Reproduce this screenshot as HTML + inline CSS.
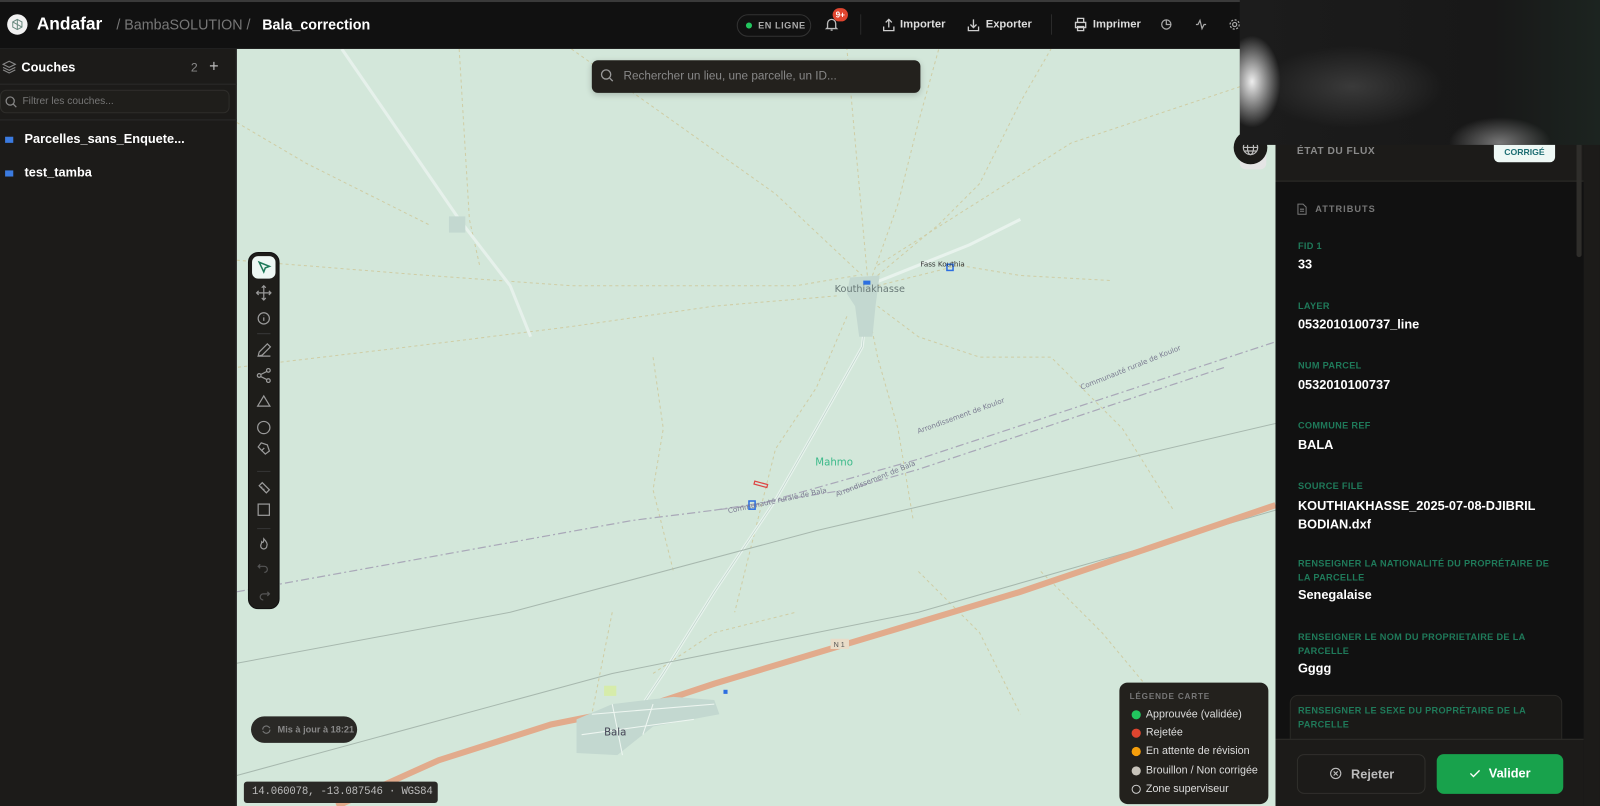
<!DOCTYPE html>
<html><head><meta charset="utf-8"><style>
*{box-sizing:border-box;margin:0;padding:0}
html,body{width:1600px;height:806px;overflow:hidden;background:#1c1b19;font-family:"Liberation Sans",sans-serif}
#w{position:absolute;left:0;top:0;width:1568px;height:790px;transform:scale(1.0204);transform-origin:0 0;overflow:hidden}
.a{position:absolute}
.t{color:#fff;font-weight:bold}
.lbl{position:absolute;left:22px;font-size:9px;font-weight:bold;color:#1f7a5a;letter-spacing:.3px}
.val{position:absolute;left:22px;font-size:12.5px;font-weight:bold;color:#fff}
.li{position:absolute;left:12px;font-size:10.5px;color:#ddd;white-space:nowrap}
.li i{position:absolute;left:0;top:2px;width:9px;height:9px;border-radius:50%}
.li span{margin-left:14px}
</style></head><body><div id="w">
<!-- map -->
<div class="a" style="left:232px;top:48px;width:1018px;height:742px;background:#d3e7da;overflow:hidden">
<svg width="1018" height="742" viewBox="232 48 1018 742" style="position:absolute;left:0;top:0">
<g fill="none" stroke="#cfcda5" stroke-width="1" stroke-dasharray="3 3">
<path d="M560 48 L760 190 L845 270"/><path d="M450 48 L460 215 L470 260"/><path d="M232 255 L420 270 L560 280 L780 280 L840 270"/>
<path d="M640 350 L650 420 L640 480 L660 560"/><path d="M830 310 L800 380 L760 440 L740 520 L720 600"/>
<path d="M850 300 L860 350 L880 420 L895 510"/><path d="M860 300 L900 330 L960 350 L1030 350 L1100 420 L1150 500"/>
<path d="M860 280 L940 260 L1000 270 L1090 275"/><path d="M860 270 L920 220 L960 180 L1000 100 L1030 48"/>
<path d="M850 270 L840 160 L830 48"/><path d="M855 270 L880 200 L900 120 L920 48"/><path d="M860 260 L1050 140 L1230 80"/>
<path d="M820 290 L700 300 L560 320 L400 340 L232 360"/><path d="M600 600 L580 700"/><path d="M640 660 L700 620 L780 600"/>
<path d="M1020 560 L1080 620 L1130 680"/><path d="M900 560 L960 620 L1000 700"/><path d="M420 220 L300 160 L232 120"/>
</g>
<path d="M335 48 L450 215 L500 280 L520 330" stroke="#e6f1eb" stroke-width="3" fill="none"/>
<path d="M850 295 L845 340 L800 420 L760 490 L700 580 L650 660 L630 690" stroke="#e8f3ed" stroke-width="3" fill="none"/>
<path d="M850 295 L845 340 L800 420 L760 490 L700 580 L650 660 L630 690" stroke="#b8cfc6" stroke-width=".6" fill="none"/>
<path d="M850 280 L900 260 L950 240 L1000 215" stroke="#e8f3ed" stroke-width="3" fill="none"/>
<g stroke="#a9a8b8" stroke-width="1.2" fill="none" stroke-dasharray="8 3 2 3">
<path d="M232 580 L620 510 L740 495 L900 450 L1250 335"/><path d="M700 500 L830 480 L900 460 L1200 360"/>
</g>
<g stroke="#a7b8ae" stroke-width="1" fill="none">
<path d="M232 650 L500 600 L800 520 L1250 415"/><path d="M232 760 L600 660 L900 600 L1250 500"/>
</g>
<path d="M330 790 L430 745 L540 710 L640 690 L700 670 L1000 580 L1250 495" stroke="#e2ab8c" stroke-width="6" fill="none"/>
<path d="M833 272 L862 270 L858 300 L855 330 L842 330 L838 300 L830 288Z" fill="#c3d8d0"/>
<path d="M565 705 L600 690 L660 683 L700 686 L705 700 L640 712 L605 740 L565 738Z" fill="#c3d8d0"/>
<path d="M440 212 L456 212 L456 228 L440 228Z" fill="#c3d8d0"/>
<g stroke="#eef6f1" stroke-width="1"><path d="M580 700 L700 690"/><path d="M600 690 L610 740"/><path d="M640 690 L630 720"/><path d="M570 720 L680 705"/></g>
<rect x="592" y="672" width="12" height="10" fill="#d6ecaa"/>
<rect x="846" y="275" width="7" height="4" fill="#2d6fe0"/><rect x="928" y="259" width="6" height="6" fill="none" stroke="#2d6fe0" stroke-width="1.5"/>
<rect x="734" y="491" width="6" height="8" fill="none" stroke="#2d6fe0" stroke-width="1.5"/><rect x="739" y="473" width="13" height="3" fill="none" stroke="#d44" stroke-width="1.2" transform="rotate(15 745 475)"/>
<rect x="709" y="676" width="4" height="4" fill="#2d6fe0"/>
<g font-family="DejaVu Sans,sans-serif" fill="#6a7a78">
<text x="818" y="286" font-size="9.5">Kouthiakhasse</text><text x="902" y="261" font-size="7" fill="#333">Fass Kouthia</text>
<text x="799" y="456" font-size="10" fill="#3cba8a">Mahmo</text><text x="592" y="721" font-size="10" fill="#445">Bala</text>
<text x="714" y="503" font-size="7" fill="#7a7a90" transform="rotate(-12 714 503)">Communauté rurale de Bala</text>
<text x="820" y="487" font-size="7" fill="#7a7a90" transform="rotate(-22 820 487)">Arrondissement de Bala</text>
<text x="900" y="425" font-size="7" fill="#7a7a90" transform="rotate(-20 900 425)">Arrondissement de Koulor</text>
<text x="1060" y="382" font-size="7" fill="#7a7a90" transform="rotate(-22 1060 382)">Communauté rurale de Koulor</text>
</g>
<rect x="814" y="626" width="18" height="10" fill="#e8dcc8"/><text x="817" y="634" font-size="7" fill="#555">N 1</text>
</svg>
</div>
<!-- topbar -->
<div class="a" style="left:0;top:0;width:1568px;height:48px;background:#111;border-top:2px solid #3a3a3a;border-bottom:1px solid #222"></div>
<div class="a" style="left:7px;top:14px;width:20px;height:20px;border-radius:50%;background:#f2f2f2"></div>
<svg class="a" style="left:11px;top:18px" width="12" height="12" fill="none" stroke="#6a8a80" stroke-width="1"><path d="M6 1l4.5 2.5v5L6 11 1.5 8.5v-5z M6 1v10M1.5 3.5L10.5 8.5"/></svg>
<div class="a t" style="left:36px;top:14px;font-size:17px">Andafar</div>
<div class="a" style="left:114px;top:16px;font-size:14px;color:#777">/ BambaSOLUTION /</div>
<div class="a t" style="left:257px;top:16px;font-size:14px">Bala_correction</div>
<div class="a" style="left:722px;top:14px;width:73px;height:22px;border:1px solid #333;border-radius:11px;font-size:9px;font-weight:bold;color:#aaa;padding:5px 0 0 20px;letter-spacing:.5px">EN LIGNE</div>
<div class="a" style="left:731px;top:22px;width:6px;height:6px;border-radius:50%;background:#22c55e"></div>
<svg class="a" style="left:808px;top:17px" width="14" height="14" fill="none" stroke="#bbb" stroke-width="1.3"><path d="M3 10V6a4 4 0 0 1 8 0v4l1 1H2z M6 12.5h2"/></svg>
<div class="a" style="left:816px;top:8px;width:15px;height:13px;border-radius:7px;background:#e0452f;color:#fff;font-size:8px;font-weight:bold;text-align:center;line-height:13px">9+</div>
<div class="a" style="left:843px;top:14px;width:1px;height:20px;background:#2a2a2a"></div>
<div class="a" style="left:1030px;top:14px;width:1px;height:20px;background:#2a2a2a"></div>
<svg class="a" style="left:864px;top:17px" width="14" height="14" fill="none" stroke="#ccc" stroke-width="1.3"><path d="M7 10V2M4 5l3-3 3 3M2 9v4h10V9"/></svg>
<div class="a" style="left:882px;top:18px;font-size:11px;color:#ddd;font-weight:bold">Importer</div>
<svg class="a" style="left:947px;top:17px" width="14" height="14" fill="none" stroke="#ccc" stroke-width="1.3"><path d="M7 2v8M4 7l3 3 3-3M2 9v4h10V9"/></svg>
<div class="a" style="left:966px;top:18px;font-size:11px;color:#ddd;font-weight:bold">Exporter</div>
<svg class="a" style="left:1052px;top:17px" width="14" height="14" fill="none" stroke="#ccc" stroke-width="1.3"><path d="M4 5V1h6v4M2 5h10v5H2zM4 9h6v4H4z"/></svg>
<div class="a" style="left:1071px;top:18px;font-size:11px;color:#ddd;font-weight:bold">Imprimer</div>
<svg class="a" style="left:1137px;top:18px" width="12" height="12" fill="none" stroke="#aaa" stroke-width="1.2"><circle cx="6" cy="6" r="4.5"/><path d="M6 1.5V6h4.5"/></svg>
<svg class="a" style="left:1171px;top:18px" width="12" height="12" fill="none" stroke="#aaa" stroke-width="1.2"><path d="M1 6h2l2-4 2 8 2-4h2"/></svg>
<svg class="a" style="left:1204px;top:18px" width="12" height="12" fill="none" stroke="#aaa" stroke-width="1.2"><circle cx="6" cy="6" r="2"/><circle cx="6" cy="6" r="4.5" stroke-dasharray="2 1.5"/></svg>
<!-- sidebar -->
<div class="a" style="left:0;top:48px;width:232px;height:742px;background:#1c1b19;border-right:1px solid #2a2a2a"></div>
<svg class="a" style="left:2px;top:58px" width="14" height="14" fill="none" stroke="#888" stroke-width="1.1"><path d="M7 2l6 3-6 3-6-3z M1 8l6 3 6-3 M1 10.5l6 3 6-3"/></svg>
<div class="a t" style="left:21px;top:59px;font-size:12.5px">Couches</div>
<div class="a" style="left:187px;top:59px;font-size:12px;color:#888">2</div>
<div class="a" style="left:205px;top:57px;font-size:16px;color:#bbb">+</div>
<div class="a" style="left:0;top:82px;width:232px;height:1px;background:#2a2a2a"></div>
<div class="a" style="left:0;top:88px;width:225px;height:23px;border:1px solid #2e2d2a;border-radius:6px;background:#1f1e1b"></div>
<svg class="a" style="left:5px;top:94px" width="12" height="12" fill="none" stroke="#888" stroke-width="1.2"><circle cx="5" cy="5" r="4"/><path d="M8 8l3 3"/></svg>
<div class="a" style="left:22px;top:94px;font-size:10px;color:#777">Filtrer les couches...</div>
<div class="a" style="left:0;top:117px;width:232px;height:1px;background:#2a2a2a"></div>
<div class="a" style="left:5px;top:134px;width:8px;height:6px;background:#3b7be0"></div>
<div class="a t" style="left:24px;top:129px;font-size:12.5px">Parcelles_sans_Enquete...</div>
<div class="a" style="left:5px;top:167px;width:8px;height:6px;background:#3b7be0"></div>
<div class="a t" style="left:24px;top:162px;font-size:12.5px">test_tamba</div>
<!-- search -->
<div class="a" style="left:580px;top:59px;width:322px;height:32px;background:#23211d;border-radius:6px;box-shadow:0 2px 6px rgba(0,0,0,.2)"></div>
<svg class="a" style="left:588px;top:67px" width="14" height="14" fill="none" stroke="#999" stroke-width="1.3"><circle cx="6" cy="6" r="4.5"/><path d="M9.5 9.5l3 3"/></svg>
<div class="a" style="left:611px;top:69px;font-size:11.5px;color:#888">Rechercher un lieu, une parcelle, un ID...</div>
<!-- toolbar -->
<div class="a" style="left:243px;top:247px;width:31px;height:350px;background:#1e1d1a;border-radius:10px;border:1px solid #111"></div>
<div class="a" style="left:247px;top:251px;width:23px;height:22px;background:#eef8f4;border-radius:6px"></div>
<svg class="a" style="left:243px;top:247px" width="31" height="350" fill="none" stroke="#9a9a9a" stroke-width="1.2">
<path d="M11 10l10 4-4 1.5-1.5 4z" stroke="#1f7a5a" stroke-width="1.5"/>
<path d="M15.5 33v14M8.5 40h14M13.5 35l2-2 2 2M13.5 45l2 2 2-2M10.5 38l-2 2 2 2M20.5 38l2 2-2 2"/>
<circle cx="15.5" cy="65" r="5.5"/><path d="M15.5 64v3.5M15.5 62.3v.3"/>
<path d="M9 80h13" stroke="#333"/>
<path d="M10 102l1-4 8-8 3 3-8 8zM10 102h12"/>
<circle cx="20" cy="116" r="1.8"/><circle cx="11" cy="121" r="1.8"/><circle cx="20" cy="126" r="1.8"/><path d="M12.5 120l6-3M12.5 122l6 3"/>
<path d="M15.5 141l6 10h-12z"/><circle cx="15.5" cy="172" r="6"/>
<path d="M10 191l3-4 6 2 2 6-4 3zM13 195l3-3"/>
<path d="M9 215h13" stroke="#333"/>
<path d="M11 229l7 7 3-3-7-7zM13 231l1-1M15 233l1-1"/><rect x="10" y="247" width="11" height="11"/>
<path d="M9 271h13" stroke="#333"/>
<path d="M15.5 281c3 3 4 5 3 7a3 3 0 0 1-6 0c0-2 1-2 1-4 1 1 2 1 2-3z"/>
<path d="M12 310l-2-2 2-2M10 308h6a3 3 0 0 1 0 6" stroke="#555"/><path d="M19 333l2 2-2 2M21 335h-6a3 3 0 0 0 0 6" stroke="#555"/>
</svg>
<!-- globe -->
<div class="a" style="left:1215px;top:136px;width:26px;height:30px;background:#e5e5e5;border-radius:6px"></div>
<div class="a" style="left:1209px;top:128px;width:33px;height:33px;border-radius:50%;background:#1c1b19"></div>
<svg class="a" style="left:1217px;top:136px" width="17" height="17" fill="none" stroke="#bbb" stroke-width="1.2"><circle cx="8.5" cy="8.5" r="7"/><ellipse cx="8.5" cy="8.5" rx="3" ry="7"/><path d="M1.5 8.5h14M3 5h11M3 12h11"/></svg>
<!-- pill & coords -->
<div class="a" style="left:246px;top:702px;width:104px;height:26px;border-radius:13px;background:#2a2926;font-size:9px;color:#888;font-weight:bold;padding:8px 0 0 26px;white-space:nowrap">Mis à jour à 18:21</div>
<svg class="a" style="left:256px;top:710px" width="10" height="10" fill="none" stroke="#777" stroke-width="1.1"><path d="M1.5 5a3.5 3.5 0 0 1 6-2.5L8.5 3.5M8.5 5a3.5 3.5 0 0 1-6 2.5L1.5 6.5"/></svg>
<div class="a" style="left:239px;top:766px;width:190px;height:21px;border-radius:3px;background:#2a2926;font-family:'Liberation Mono',monospace;font-size:10.5px;color:#bbb;padding:4px 0 0 8px;white-space:nowrap;letter-spacing:-.2px">14.060078, -13.087546 · WGS84</div>
<!-- legend -->
<div class="a" style="left:1097px;top:669px;width:146px;height:119px;border-radius:8px;background:#23211d">
<div class="a" style="left:10px;top:9px;font-size:8px;font-weight:bold;color:#777;letter-spacing:.8px">LÉGENDE CARTE</div>
<div class="li" style="top:25px"><i style="background:#22c55e"></i><span>Approuvée (validée)</span></div>
<div class="li" style="top:43px"><i style="background:#e0452f"></i><span>Rejetée</span></div>
<div class="li" style="top:61px"><i style="background:#f59e0b"></i><span>En attente de révision</span></div>
<div class="li" style="top:80px"><i style="background:#c8c4bb"></i><span>Brouillon / Non corrigée</span></div>
<div class="li" style="top:98px"><i style="border:1px solid #ccc"></i><span>Zone superviseur</span></div>
</div>
<!-- right panel -->
<div class="a" style="left:1250px;top:48px;width:318px;height:742px;background:#111"></div>
<div class="a" style="left:1250px;top:120px;width:302px;height:58px;background:#1c1b19;border-bottom:1px solid #2e2d2a"></div>
<div class="a" style="left:1271px;top:143px;font-size:10px;font-weight:bold;color:#8a8a8a;letter-spacing:.5px">ÉTAT DU FLUX</div>
<div class="a" style="left:1464px;top:138px;width:60px;height:21px;border-radius:0 0 5px 5px;background:#eef8f5;font-size:8.5px;font-weight:bold;color:#1d6e73;text-align:center;padding-top:6px">CORRIGÉ</div>
<div class="a" style="left:1552px;top:48px;width:16px;height:742px;background:#1c1b19"></div>
<div class="a" style="left:1545px;top:140px;width:5px;height:112px;border-radius:3px;background:#2f2e2b"></div>
<div class="a" style="left:1250px;top:178px;width:295px;height:550px">
<svg class="a" style="left:21px;top:21px" width="10" height="12" fill="none" stroke="#777" stroke-width="1"><path d="M1 1h5l3 3v7H1zM3 6h4M3 8h4"/></svg>
<div class="a" style="left:39px;top:22px;font-size:9px;font-weight:bold;color:#777;letter-spacing:1px">ATTRIBUTS</div>
<div class="lbl" style="top:58px">FID 1</div><div class="val" style="top:74px">33</div>
<div class="lbl" style="top:117px">LAYER</div><div class="val" style="top:133px">0532010100737_line</div>
<div class="lbl" style="top:175px">NUM PARCEL</div><div class="val" style="top:192px">0532010100737</div>
<div class="lbl" style="top:234px">COMMUNE REF</div><div class="val" style="top:251px">BALA</div>
<div class="lbl" style="top:293px">SOURCE FILE</div><div class="val" style="top:309px;line-height:18px">KOUTHIAKHASSE_2025-07-08-DJIBRIL<br>BODIAN.dxf</div>
<div class="lbl" style="top:367px;line-height:14px;width:250px">RENSEIGNER LA NATIONALITÉ DU PROPRÉTAIRE DE LA PARCELLE</div><div class="val" style="top:398px">Senegalaise</div>
<div class="lbl" style="top:439px;line-height:14px;width:250px">RENSEIGNER LE NOM DU PROPRIETAIRE DE LA PARCELLE</div><div class="val" style="top:470px">Gggg</div>
<div class="a" style="left:14px;top:503px;width:267px;height:60px;border:1px solid #2a2926;border-radius:8px;background:#1a1917"></div>
<div class="lbl" style="top:511px;line-height:14px;width:250px">RENSEIGNER LE SEXE DU PROPRÉTAIRE DE LA PARCELLE</div>
</div>
<div class="a" style="left:1250px;top:724px;width:302px;height:66px;background:#1c1b19;border-top:1px solid #2e2d2a"></div>
<div class="a" style="left:1271px;top:739px;width:126px;height:39px;border:1px solid #302f2c;border-radius:7px;font-size:12.5px;font-weight:bold;color:#bbb;padding:12px 0 0 52px">Rejeter</div>
<svg class="a" style="left:1303px;top:752px" width="12" height="12" fill="none" stroke="#bbb" stroke-width="1.1"><circle cx="6" cy="6" r="5"/><path d="M4 4l4 4M8 4l-4 4"/></svg>
<div class="a" style="left:1408px;top:739px;width:124px;height:39px;border-radius:7px;background:#18a24c;font-size:12.5px;font-weight:bold;color:#fff;padding:12px 0 0 51px">Valider</div>
<svg class="a" style="left:1440px;top:753px" width="11" height="10" fill="none" stroke="#fff" stroke-width="1.3"><path d="M1 5l3 3 6-6"/></svg>
<!-- blurred overlay -->
<div class="a" style="left:1215px;top:0;width:353px;height:142px;background:radial-gradient(ellipse 28px 45px at 12px 80px,#eee,rgba(40,40,40,0) 100%),radial-gradient(ellipse 50px 25px at 255px 140px,#777,rgba(30,30,30,0)),radial-gradient(ellipse 90px 40px at 110px 85px,#3a3a3a,rgba(30,30,30,0)),linear-gradient(90deg,#1c1c1c,#181818 70%,#1c2420)"></div>
</div></body></html>
